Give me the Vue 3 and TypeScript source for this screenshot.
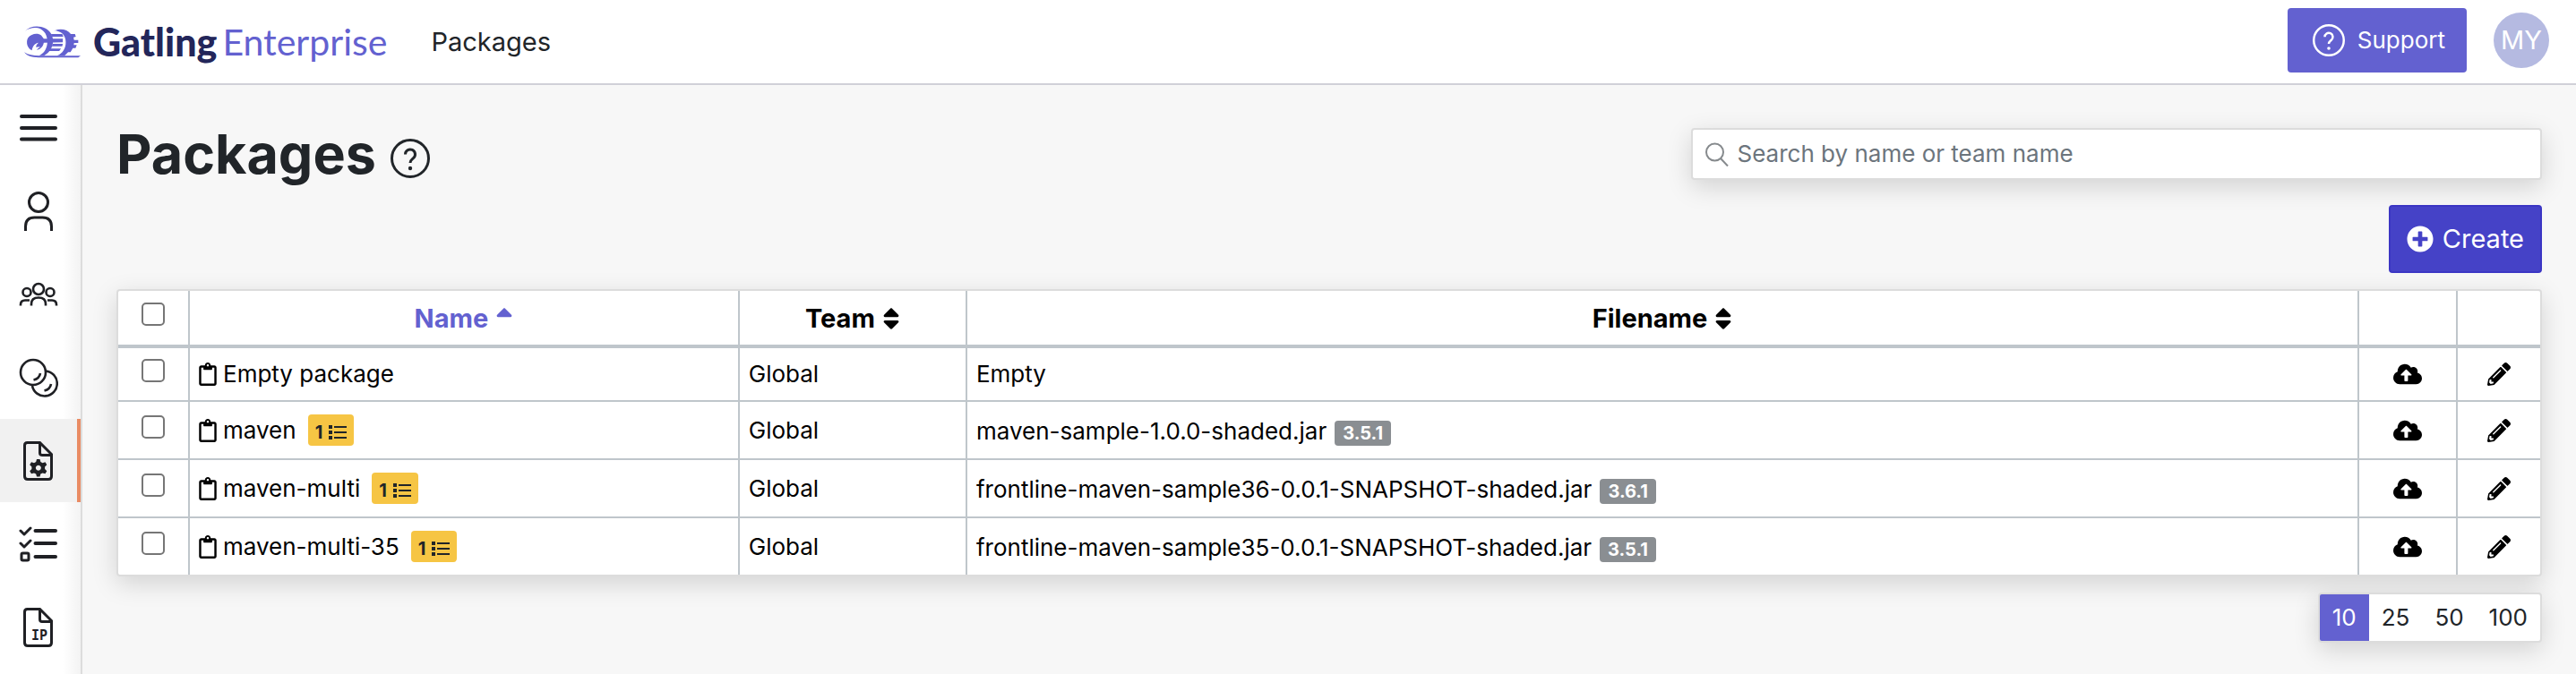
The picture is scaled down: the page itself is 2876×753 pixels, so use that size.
<script setup lang="ts">
import { computed, ref } from 'vue'

interface Pkg {
  name: string
  team: string
  file: string
  version?: string
  simulations?: number
}

const packages: Pkg[] = [
  { name: 'Empty package', team: 'Global', file: 'Empty' },
  { name: 'maven', team: 'Global', file: 'maven-sample-1.0.0-shaded.jar', version: '3.5.1', simulations: 1 },
  { name: 'maven-multi', team: 'Global', file: 'frontline-maven-sample36-0.0.1-SNAPSHOT-shaded.jar', version: '3.6.1', simulations: 1 },
  { name: 'maven-multi-35', team: 'Global', file: 'frontline-maven-sample35-0.0.1-SNAPSHOT-shaded.jar', version: '3.5.1', simulations: 1 },
]

const pageSizes = [10, 25, 50, 100]
const pageSize = ref(10)
const search = ref('')
const selected = ref<string[]>([])

const visible = computed(() => {
  const term = search.value.trim().toLowerCase()
  return packages
    .filter((p) => !term || p.name.toLowerCase().includes(term) || p.team.toLowerCase().includes(term))
    .slice(0, pageSize.value)
})

const allSelected = computed({
  get: () => visible.value.length > 0 && selected.value.length === visible.value.length,
  set: (on: boolean) => {
    selected.value = on ? visible.value.map((p) => p.name) : []
  },
})
</script>

<template>
  <div class="app">
    <header class="topbar">
      <a class="logo" href="#" aria-label="Gatling Enterprise">
        <svg class="logo-mark" viewBox="0 0 190 108" aria-hidden="true">
          <path d="M3 17C18 0 48-4 72 8c18 10 26 28 25 44-1 22-12 38-30 48H50c18-8 28-26 28-48C78 24 60 6 38 6 24 6 12 10 3 17z" />
          <path d="M104 15c18-8 42-4 53 12h14l3 9-8 2 2 9h14v10h-14l-1 7h10l-4 10h-9l-8 14h-8l-12 12h-26c20-8 30-24 30-46 0-22-14-38-42-39z" />
          <path d="M0 88c14 9 30 12 50 12h140l-8 6H58C32 106 12 104 0 88z" />
          <path d="M58 32C46 22 24 25 13 40 5 54 10 76 26 82c2-14 10-24 22-26-5 5-8 9-8 15l14-1-12 10c12-2 21-9 24-24l64-1V43H66z" />
          <path d="M90 27h38l4 9H94zM96 60h34l-2 8H93zM88 76h36l-6 8H82z" />
        </svg>
        <span class="logo-name">Gatling</span>
        <span class="logo-edition">Enterprise</span>
      </a>
      <span class="crumb">Packages</span>
      <button class="support" type="button">
        <svg class="support-icon line-icon" viewBox="0 0 44 44" aria-hidden="true">
          <circle cx="22" cy="22" r="20.5" />
          <path d="M16.500 17.500a5.500 5.500 0 1 1 9 4.200C23.500 23.500 22 24 22 27" />
          <circle class="dot" cx="22" cy="33" r="2.200" />
        </svg>
        Support
      </button>
      <button class="avatar" type="button" aria-label="Account MY">MY</button>
    </header>

    <div class="body">
      <nav class="sidebar" aria-label="Main">
        <button class="nav-item" type="button" aria-label="Menu">
          <svg class="nav-icon" viewBox="0 0 44 44" aria-hidden="true">
            <path class="heavy" d="M3 9h38M3 22h38M3 34.500h38" />
          </svg>
        </button>
        <a class="nav-item" href="#" aria-label="Users">
          <svg class="nav-icon" viewBox="0 0 44 44" aria-hidden="true">
            <circle cx="22" cy="12" r="10.500" />
            <path d="M7.500 44V39q0-10 10-10h9q10 0 10 10v5" />
          </svg>
        </a>
        <a class="nav-item" href="#" aria-label="Teams">
          <svg class="nav-icon thin" viewBox="0 0 44 44" aria-hidden="true">
            <circle cx="22" cy="16" r="6" />
            <circle cx="9" cy="19.500" r="4.500" />
            <circle cx="35" cy="19.500" r="4.500" />
            <path d="M14 34.500v-2q0-7 8-7t8 7v2M2 34.500v-1q0-5 5-5h5M42 34.500v-1q0-5-5-5h-5" />
          </svg>
        </a>
        <a class="nav-item" href="#" aria-label="Pools">
          <svg class="nav-icon thin" viewBox="0 0 44 44" aria-hidden="true">
            <circle cx="16" cy="16" r="14" />
            <path d="M30 14.500A14 14 0 1 1 15 31M24 17q-1 6-7.500 7.500M36 29q-1 6-7.500 7.500" />
          </svg>
        </a>
        <a class="nav-item active" href="#" aria-label="Packages" aria-current="page">
          <svg class="nav-icon" viewBox="0 0 44 44" aria-hidden="true">
            <path d="M9.500 1.500h14l13 13V39q0 3.500-3.500 3.500H10Q6.500 42.500 6.500 39V4.500q0-3 3-3z" />
            <path d="M23.500 2v11q0 2.500 2.500 2.500h10" />
            <path class="gear" d="M20 20h3.500l.8 3 2.200 1.200 3-.9 1.800 3-2.200 2.200v2.600l2.200 2.200-1.800 3-3-.9-2.200 1.200-.8 3H20l-.8-3-2.200-1.200-3 .9-1.800-3 2.200-2.200v-2.600l-2.200-2.200 1.800-3 3 .9 2.200-1.200zM21.800 26.800a3 3 0 1 0 .1 0z" />
          </svg>
        </a>
        <a class="nav-item" href="#" aria-label="Tests">
          <svg class="nav-icon" viewBox="0 0 44 44" aria-hidden="true">
            <path d="M18.500 7H41M18.500 21H41M18.500 36H41" class="heavy" />
            <path class="check" d="M2 7l4 4 7-7M2 21l4 4 7-7" />
            <rect x="3" y="32" width="8" height="8" rx="1.500" />
          </svg>
        </a>
        <a class="nav-item" href="#" aria-label="Private locations">
          <svg class="nav-icon" viewBox="0 0 44 44" aria-hidden="true">
            <path d="M9.500 1.500h14l13 13V39q0 3.500-3.500 3.500H10Q6.500 42.500 6.500 39V4.500q0-3 3-3z" />
            <path d="M23.500 2v11q0 2.500 2.500 2.500h10" />
            <text x="23" y="36" text-anchor="middle">IP</text>
          </svg>
        </a>
      </nav>

      <main class="content">
        <div class="head">
          <h1 class="title">Packages</h1>
          <button class="help" type="button" aria-label="Help">
            <svg class="help-icon line-icon" viewBox="0 0 44 44" aria-hidden="true">
              <circle cx="22" cy="22" r="20.500" />
              <path d="M16.500 17.500a5.500 5.500 0 1 1 9 4.200C23.500 23.500 22 24 22 27" />
              <circle class="dot" cx="22" cy="33" r="2.200" />
            </svg>
          </button>
          <label class="search card">
            <svg class="search-icon" viewBox="0 0 26 27" aria-hidden="true">
              <circle cx="10.500" cy="11" r="9.500" />
              <path d="M17 18l8 8.500" />
            </svg>
            <input v-model="search" type="text" placeholder="Search by name or team name" aria-label="Search by name or team name" />
          </label>
        </div>

        <div class="actions">
          <button class="create" type="button">
            <svg class="create-icon" viewBox="0 0 512 512" aria-hidden="true">
              <path d="M256 8C119 8 8 119 8 256s111 248 248 248 248-111 248-248S393 8 256 8zm144 276c0 6.600-5.400 12-12 12h-92v92c0 6.600-5.400 12-12 12h-56c-6.600 0-12-5.400-12-12v-92h-92c-6.600 0-12-5.400-12-12v-56c0-6.600 5.400-12 12-12h92v-92c0-6.600 5.400-12 12-12h56c6.600 0 12 5.400 12 12v92h92c6.600 0 12 5.400 12 12v56z" />
            </svg>
            Create
          </button>
        </div>

        <div class="card table-card">
          <table class="packages">
            <colgroup>
              <col class="col-check" />
              <col class="col-name" />
              <col class="col-team" />
              <col />
              <col class="col-upload" />
              <col class="col-edit" />
            </colgroup>
            <thead>
              <tr>
                <th class="check-cell"><input v-model="allSelected" type="checkbox" aria-label="Select all packages" /></th>
                <th aria-sort="ascending">
                  <button class="sort sorted" type="button">
                    Name
                    <svg class="sort-icon" viewBox="0 0 320 512" aria-hidden="true">
                      <path d="M279 224H41c-21.400 0-32.100-25.900-17-41L143 64c9.400-9.400 24.600-9.400 33.900 0l119 119c15.200 15.100 4.500 41-16.900 41z" />
                    </svg>
                  </button>
                </th>
                <th v-for="label in ['Team', 'Filename']" :key="label">
                  <button class="sort" type="button">
                    {{ label }}
                    <svg class="sort-icon" viewBox="0 0 320 512" aria-hidden="true">
                      <path d="M41 288h238c21.400 0 32.100 25.900 17 41L177 448c-9.400 9.400-24.600 9.400-33.900 0L24 329c-15.100-15.100-4.400-41 17-41zm255-105L177 64c-9.400-9.400-24.600-9.400-33.900 0L24 183c-15.100 15.100-4.400 41 17 41h238c21.400 0 32.100-25.900 17-41z" />
                    </svg>
                  </button>
                </th>
                <th></th>
                <th></th>
              </tr>
            </thead>
            <tbody>
              <tr v-for="pkg in visible" :key="pkg.name">
                <td class="check-cell"><input v-model="selected" type="checkbox" :value="pkg.name" :aria-label="`Select ${pkg.name}`" /></td>
                <td>
                  <div class="name">
                    <svg class="clip-icon" viewBox="0 0 384 512" aria-hidden="true">
                      <path d="M336 64h-80c0-35.300-28.700-64-64-64s-64 28.700-64 64H48C21.500 64 0 85.500 0 112v352c0 26.500 21.500 48 48 48h288c26.500 0 48-21.500 48-48V112c0-26.500-21.500-48-48-48zM192 40c13.300 0 24 10.700 24 24s-10.700 24-24 24-24-10.700-24-24 10.700-24 24-24zm144 418c0 3.300-2.700 6-6 6H54c-3.300 0-6-2.700-6-6V118c0-3.300 2.700-6 6-6h42v36c0 6.600 5.400 12 12 12h168c6.600 0 12-5.400 12-12v-36h42c3.300 0 6 2.700 6 6z" />
                    </svg>
                    {{ pkg.name }}
                    <span v-if="pkg.simulations" class="count">
                      {{ pkg.simulations }}
                      <svg class="list-icon" viewBox="0 0 20 16" aria-hidden="true">
                        <path d="M0 0h4v4H0zM0 6h4v4H0zM0 12h4v4H0zM6 1h14v2H6zM6 7h14v2H6zM6 13h14v2H6z" />
                      </svg>
                    </span>
                  </div>
                </td>
                <td>{{ pkg.team }}</td>
                <td>
                  <div class="file" :class="{ versioned: pkg.version }">
                    {{ pkg.file }}
                    <span v-if="pkg.version" class="version">{{ pkg.version }}</span>
                  </div>
                </td>
                <td>
                  <button class="icon-btn" type="button" :aria-label="`Upload ${pkg.name}`">
                    <svg class="upload-icon" viewBox="0 0 640 512" aria-hidden="true">
                      <path d="M537.600 226.600c4.100-10.700 6.400-22.400 6.400-34.600 0-53-43-96-96-96-19.700 0-38.100 6-53.300 16.200C367 64.200 315.300 32 256 32c-88.400 0-160 71.600-160 160 0 2.700.1 5.400.2 8.100C40.200 219.800 0 273.200 0 336c0 79.500 64.500 144 144 144h368c70.700 0 128-57.300 128-128 0-61.900-44-113.600-102.400-125.400zM393.400 288H328v112c0 8.800-7.200 16-16 16h-48c-8.800 0-16-7.200-16-16V288h-65.400c-14.300 0-21.400-17.200-11.300-27.300l105.400-105.400c6.200-6.200 16.400-6.200 22.600 0l105.400 105.400c10.100 10.100 2.900 27.300-11.300 27.300z" />
                    </svg>
                  </button>
                </td>
                <td>
                  <button class="icon-btn" type="button" :aria-label="`Edit ${pkg.name}`">
                    <svg class="edit-icon" viewBox="0 0 512 512" aria-hidden="true">
                      <path d="M497.900 142.100l-46.100 46.100c-4.700 4.700-12.300 4.700-17 0l-111-111c-4.700-4.700-4.700-12.300 0-17l46.100-46.100c18.700-18.700 49.100-18.700 67.900 0l60.100 60.100c18.800 18.700 18.800 49.100 0 67.900zM284.200 99.800L21.600 362.400.4 483.900c-2.900 16.400 11.400 30.600 27.800 27.800l121.500-21.300 262.600-262.600c4.700-4.700 4.700-12.300 0-17l-111-111c-4.800-4.700-12.400-4.700-17.100 0zM124.100 339.900c-5.500-5.500-5.500-14.300 0-19.800l154-154c5.500-5.500 14.300-5.500 19.800 0s5.500 14.300 0 19.800l-154 154c-5.500 5.500-14.300 5.500-19.800 0zM88 424h48v36.300l-64.500 11.300-31.100-31.100L51.700 376H88v48z" />
                    </svg>
                  </button>
                </td>
              </tr>
            </tbody>
          </table>
        </div>

        <div class="pager">
          <div class="sizes card" role="group" aria-label="Rows per page">
            <button v-for="n in pageSizes" :key="n" type="button" class="size" :class="{ current: n === pageSize }" @click="pageSize = n">{{ n }}</button>
          </div>
        </div>
      </main>
    </div>
  </div>
</template>

<style>
body {
  margin: 0;
  background: #f7f7f7;
}
</style>

<style scoped>
.app {
  display: flex;
  flex-direction: column;
  min-height: 100vh;
  font-family: Inter, "Liberation Sans", sans-serif;
  font-size: 26px;
  line-height: 30px;
  color: #212529;
}

.app *,
.app {
  box-sizing: border-box;
}

button,
input {
  margin: 0;
  font: inherit;
  color: inherit;
}

button {
  padding: 0;
  border: 0;
  background: none;
  cursor: pointer;
}

svg {
  display: block;
  flex: none;
  fill: currentColor;
}

.topbar {
  display: flex;
  align-items: center;
  height: 95px;
  padding: 0 30px 4px 27px;
  border-bottom: 2px solid #d0d0d8;
  background: #fff;
}

.logo {
  display: flex;
  align-items: center;
  padding-top: 4px;
  color: #6361d0;
  font-family: Lato, "Open Sans", sans-serif;
  line-height: 48px;
  text-decoration: none;
}

.logo-mark {
  width: 63px;
  height: 36px;
  margin-right: 14px;
}

.logo-name {
  margin-right: 6px;
  color: #23265a;
  font-size: 43px;
  font-weight: 900;
}

.logo-edition {
  font-size: 41px;
}

.crumb {
  margin-left: 49px;
  padding-top: 4px;
  font-size: 29px;
}

.support {
  display: flex;
  align-items: center;
  gap: 14px;
  height: 72px;
  margin-left: auto;
  padding: 0 24px 0 28px;
  border-radius: 4px;
  background: #6361d0;
  color: #fff;
}

.support-icon {
  width: 36px;
  height: 36px;
}

.line-icon {
  fill: none;
  stroke: currentColor;
  stroke-width: 3;
}

.line-icon .dot {
  fill: currentColor;
  stroke: none;
}

.avatar {
  width: 62px;
  height: 62px;
  margin-left: 30px;
  border-radius: 50%;
  background: #b5bae1;
  color: #fff;
  font-size: 29px;
}

.body {
  display: flex;
  flex: 1;
}

.sidebar {
  display: flex;
  flex: none;
  flex-direction: column;
  width: 92px;
  padding-top: 1px;
  border-right: 2px solid #dcdcdc;
  background: linear-gradient(to right, #fff 78%, #f3f3f3);
}

.nav-item {
  display: flex;
  align-items: center;
  justify-content: center;
  height: 93px;
  padding-right: 4px;
  color: #1f2024;
}

.nav-item.active {
  padding-right: 0;
  border-right: 4px solid #e98b63;
  background: #f1f1f1;
}

.nav-icon {
  width: 44px;
  height: 44px;
  fill: none;
  stroke: currentColor;
  stroke-width: 3;
}

.nav-icon .heavy {
  stroke-width: 4;
  stroke-linecap: round;
}

.nav-icon .check {
  stroke-linecap: round;
  stroke-linejoin: round;
}

.nav-icon.thin {
  stroke-width: 2.6;
}

.nav-icon .gear {
  fill: currentColor;
  fill-rule: evenodd;
  stroke: none;
}

.nav-icon text {
  fill: currentColor;
  stroke: none;
  font-family: "DejaVu Sans Mono", monospace;
  font-size: 15px;
  font-weight: 700;
}

.content {
  flex: 1;
  min-width: 0;
  padding: 48px 38px 34px;
}

.card {
  border: 2px solid #dcdcdc;
  border-radius: 4px;
  background: #fff;
  box-shadow: 0 8px 28px rgba(0, 0, 0, 0.15);
}

.head {
  display: flex;
  align-items: center;
  height: 58px;
}

.title {
  margin: 0;
  font-size: 61px;
  line-height: 58px;
  font-weight: 700;
}

.help {
  margin: 10px 0 0 16px;
}

.help-icon {
  width: 44px;
  height: 44px;
}

.search {
  display: flex;
  align-items: center;
  gap: 10px;
  width: 35.1%;
  height: 58px;
  margin-left: auto;
  padding: 0 14px;
}

.search-icon {
  width: 26px;
  height: 27px;
  fill: none;
  stroke: #868a8d;
  stroke-width: 2;
}

.search input {
  flex: 1;
  min-width: 0;
  padding: 0;
  border: 0;
  outline: 0;
  background: none;
}

.search input::placeholder {
  color: #6c757d;
  opacity: 1;
}

.actions {
  display: flex;
  justify-content: flex-end;
  margin: 28px 0 18px;
}

.create {
  display: flex;
  align-items: center;
  gap: 10px;
  height: 76px;
  padding: 0 18px;
  border: 2px solid #3b36c4;
  border-radius: 4px;
  background: #4542c7;
  color: #fff;
  font-size: 29px;
}

.create-icon {
  width: 30px;
  height: 30px;
}

.packages {
  width: 100%;
  border-spacing: 0;
  table-layout: fixed;
  color: #000;
}

.col-check {
  width: 80px;
}

.col-name {
  width: 22.7%;
}

.col-team {
  width: 9.4%;
}

.col-upload {
  width: 110px;
}

.col-edit {
  width: 92px;
}

.packages th,
.packages td {
  padding: 14px 10px;
  border-right: 2px solid #bfc6cb;
  border-bottom: 2px solid #bfc6cb;
}

.packages th {
  height: 64px;
  padding: 16px 10px 14px;
  border-bottom-width: 4px;
}

.packages th:last-child,
.packages td:last-child {
  border-right: 0;
}

.packages tbody tr:last-child td {
  border-bottom: 0;
}

.packages .check-cell {
  padding: 10px 0 18px;
}

.check-cell input {
  display: block;
  width: 26px;
  height: 26px;
  margin: 0 auto;
  border: 2px solid #767676;
  border-radius: 5px;
  appearance: none;
  background: #fff;
}

.check-cell input:checked {
  border-color: #6361d0;
  background: #6361d0;
}

.sort {
  display: flex;
  align-items: center;
  justify-content: center;
  gap: 8px;
  width: 100%;
  font-size: 29px;
  font-weight: 700;
}

.sorted {
  color: #6361d0;
}

.sort-icon {
  width: 20px;
  height: 30px;
}

.name {
  display: flex;
  align-items: center;
}

.clip-icon {
  width: 20px;
  height: 26px;
  margin-right: 7px;
}

.count {
  display: flex;
  align-items: center;
  gap: 7px;
  height: 35px;
  margin-left: 13px;
  padding: 4px 8px 0;
  border-radius: 4px;
  background: #f6c544;
  color: #212529;
  font-size: 20px;
  font-weight: 700;
}

.list-icon {
  width: 20px;
  height: 16px;
}

.file {
  display: flex;
  align-items: baseline;
}

.file.versioned {
  padding-top: 4px;
}

.version {
  margin-left: 9px;
  padding: 0 9px;
  border-radius: 4px;
  background: #8a8e92;
  color: #fff;
  font-size: 20px;
  line-height: 28px;
  font-weight: 700;
}

.icon-btn {
  display: block;
  margin: 0 auto;
}

.upload-icon {
  width: 32px;
  height: 26px;
}

.edit-icon {
  width: 26px;
  height: 26px;
}

.pager {
  display: flex;
  justify-content: flex-end;
  margin-top: 18px;
}

.sizes {
  display: flex;
  overflow: hidden;
}

.size {
  height: 52px;
  padding: 0 14px;
}

.size.current {
  background: #6361d0;
  color: #fff;
}
</style>
